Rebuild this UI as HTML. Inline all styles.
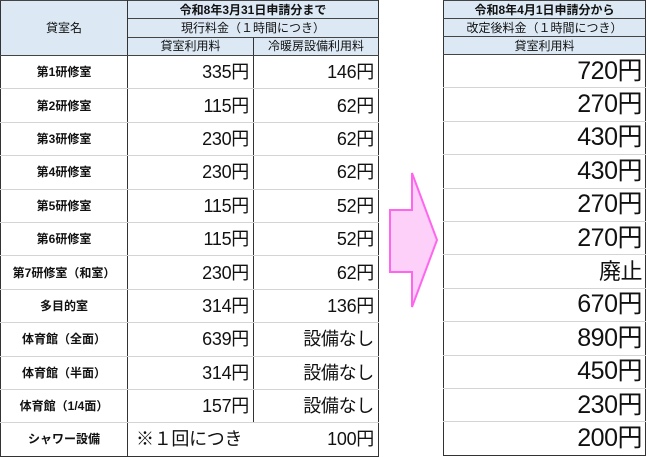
<!DOCTYPE html>
<html><head><meta charset="utf-8"><style>
body{margin:0;width:650px;height:458px;background:#fff;position:relative;overflow:hidden;font-family:"Liberation Sans","Noto Sans CJK JP",sans-serif;color:#111}
table{border-collapse:collapse;position:absolute;table-layout:fixed}
td{padding:0;border-left:1px solid #333;border-right:1px solid #333;border-top:1px solid #d4d4d4;border-bottom:1px solid #d4d4d4;white-space:nowrap;overflow:hidden}
.h td{background:#dce9f5;text-align:center;font-size:12px;line-height:14px;border-top:1px solid #444;border-bottom:1px solid #444;height:17px}
.nm{text-align:center;font-size:12px;font-weight:bold;line-height:1}
.n{text-align:right;font-size:18px;padding-right:4px;letter-spacing:-0.3px;line-height:1}
.r{text-align:right;font-size:25px;padding-right:3px;letter-spacing:-0.5px;line-height:1}
tr.d{height:33.4px}
</style></head><body>
<table style="left:0;top:0;width:378px">
<colgroup><col style="width:127px"><col style="width:126px"><col style="width:125px"></colgroup>
<tr class="h"><td rowspan="3" style="height:54px">貸室名</td><td colspan="2" style="font-weight:bold">令和8年3月31日申請分まで</td></tr>
<tr class="h"><td colspan="2">現行料金（１時間につき）</td></tr>
<tr class="h"><td>貸室利用料</td><td>冷暖房設備利用料</td></tr>
<tr class="d"><td class="nm">第1研修室</td><td class="n">335円</td><td class="n">146円</td></tr>
<tr class="d"><td class="nm">第2研修室</td><td class="n">115円</td><td class="n">62円</td></tr>
<tr class="d"><td class="nm">第3研修室</td><td class="n">230円</td><td class="n">62円</td></tr>
<tr class="d"><td class="nm">第4研修室</td><td class="n">230円</td><td class="n">62円</td></tr>
<tr class="d"><td class="nm">第5研修室</td><td class="n">115円</td><td class="n">52円</td></tr>
<tr class="d"><td class="nm">第6研修室</td><td class="n">115円</td><td class="n">52円</td></tr>
<tr class="d"><td class="nm">第7研修室（和室）</td><td class="n">230円</td><td class="n">62円</td></tr>
<tr class="d"><td class="nm">多目的室</td><td class="n">314円</td><td class="n">136円</td></tr>
<tr class="d"><td class="nm">体育館（全面）</td><td class="n">639円</td><td class="n">設備なし</td></tr>
<tr class="d"><td class="nm">体育館（半面）</td><td class="n">314円</td><td class="n">設備なし</td></tr>
<tr class="d"><td class="nm">体育館（1/4面）</td><td class="n">157円</td><td class="n">設備なし</td></tr>
<tr class="d"><td class="nm" style="border-bottom:1px solid #333">シャワー設備</td><td colspan="2" class="n" style="border-bottom:1px solid #333"><span style="float:left;padding-left:8px">※１回につき</span>100円</td></tr>
</table>
<table style="left:443px;top:0;width:203px">
<tr class="h"><td style="font-weight:bold">令和8年4月1日申請分から</td></tr>
<tr class="h"><td>改定後料金（１時間につき）</td></tr>
<tr class="h"><td>貸室利用料</td></tr>
<tr class="d"><td class="r">720円</td></tr>
<tr class="d"><td class="r">270円</td></tr>
<tr class="d"><td class="r">430円</td></tr>
<tr class="d"><td class="r">430円</td></tr>
<tr class="d"><td class="r">270円</td></tr>
<tr class="d"><td class="r">270円</td></tr>
<tr class="d"><td class="r" style="font-size:22px">廃止</td></tr>
<tr class="d"><td class="r">670円</td></tr>
<tr class="d"><td class="r">890円</td></tr>
<tr class="d"><td class="r">450円</td></tr>
<tr class="d"><td class="r">230円</td></tr>
<tr class="d"><td class="r" style="border-bottom:1px solid #333">200円</td></tr>
</table>
<svg style="position:absolute;left:0;top:0" width="650" height="458"><polygon points="390,210 412,210 412,173 437,240 412,307 412,272 390,272" fill="#fcd0f8" stroke="#ff66ee" stroke-width="2"/></svg>
</body></html>
